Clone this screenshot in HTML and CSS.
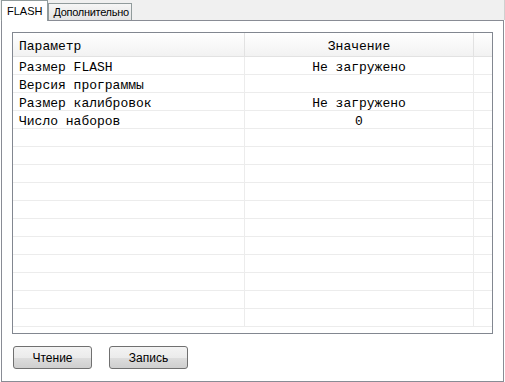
FILE: index.html
```html
<!DOCTYPE html>
<html>
<head>
  <title>FLASH</title>
  <link rel="stylesheet" href="styles.css">
</head>
<body>
  <div class="window">
    <div class="tabs">
      <div class="tab tab-active">FLASH</div>
      <div class="tab">Дополнительно</div>
    </div>

    <div class="pane">
      <div class="grid">
        <div class="grid-row grid-head">
          <div class="cell cell-name">Параметр</div>
          <div class="cell cell-value">Значение</div>
          <div class="cell cell-end"></div>
        </div>
        <div class="grid-row">
          <div class="cell cell-name">Размер FLASH</div>
          <div class="cell cell-value">Не загружено</div>
          <div class="cell cell-end"></div>
        </div>
        <div class="grid-row">
          <div class="cell cell-name">Версия программы</div>
          <div class="cell cell-value"></div>
          <div class="cell cell-end"></div>
        </div>
        <div class="grid-row">
          <div class="cell cell-name">Размер калибровок</div>
          <div class="cell cell-value">Не загружено</div>
          <div class="cell cell-end"></div>
        </div>
        <div class="grid-row">
          <div class="cell cell-name">Число наборов</div>
          <div class="cell cell-value">0</div>
          <div class="cell cell-end"></div>
        </div>
        <div class="grid-row"><div class="cell cell-name"></div><div class="cell cell-value"></div><div class="cell cell-end"></div></div>
        <div class="grid-row"><div class="cell cell-name"></div><div class="cell cell-value"></div><div class="cell cell-end"></div></div>
        <div class="grid-row"><div class="cell cell-name"></div><div class="cell cell-value"></div><div class="cell cell-end"></div></div>
        <div class="grid-row"><div class="cell cell-name"></div><div class="cell cell-value"></div><div class="cell cell-end"></div></div>
        <div class="grid-row"><div class="cell cell-name"></div><div class="cell cell-value"></div><div class="cell cell-end"></div></div>
        <div class="grid-row"><div class="cell cell-name"></div><div class="cell cell-value"></div><div class="cell cell-end"></div></div>
        <div class="grid-row"><div class="cell cell-name"></div><div class="cell cell-value"></div><div class="cell cell-end"></div></div>
        <div class="grid-row"><div class="cell cell-name"></div><div class="cell cell-value"></div><div class="cell cell-end"></div></div>
        <div class="grid-row"><div class="cell cell-name"></div><div class="cell cell-value"></div><div class="cell cell-end"></div></div>
        <div class="grid-row"><div class="cell cell-name"></div><div class="cell cell-value"></div><div class="cell cell-end"></div></div>
        <div class="grid-row"><div class="cell cell-name"></div><div class="cell cell-value"></div><div class="cell cell-end"></div></div>
      </div>

      <div class="buttons">
        <button id="readBtn">Чтение</button>
        <button id="writeBtn">Запись</button>
      </div>
    </div>
  </div>
</body>
</html>
```

FILE: styles.css
```css
    :root {
      --bg-color: #ffffff;
      --strip-bg: #f0f0f0;
      --pane-border: #898c95;
      --grid-border: #828790;
      --grid-line: #ececec;
      --text-color: #000000;
    }

    body {
      margin: 0;
      background-color: var(--bg-color);
      color: var(--text-color);
      font-family: 'Liberation Sans', Arial, sans-serif;
      font-size: 11px;
    }

    .window {
      width: 505px;
      height: 382px;
      display: flex;
      flex-direction: column;
    }

    /* Tab strip */
    .tabs {
      display: flex;
      align-items: flex-end;
      height: 20px;
      padding-left: 1px;
      background-color: var(--strip-bg);
      border-right: 1px solid #d0d0d0;
    }

    .tab {
      height: 16px;
      padding: 0 2px 0 4px;
      line-height: 17px;
      letter-spacing: -0.3px;
      border: 1px solid #919b9c;
      border-bottom: none;
      background: linear-gradient(#f6f6f6, #e4e4e4);
      white-space: nowrap;
    }

    .tab-active {
      height: 20px;
      line-height: 20px;
      padding: 0 5px 0 5px;
      letter-spacing: 0;
      background: var(--bg-color);
      margin-bottom: -1px; /* sits over the pane border */
      position: relative;
      z-index: 1;
    }

    /* Content pane */
    .pane {
      margin-left: 1px;
      border: 1px solid var(--pane-border);
      padding: 11px 10px 0 10px;
      display: flex;
      flex-direction: column;
      width: 481px;
      height: 349px;
    }

    .grid {
      width: 479px;
      height: 300px;
      border: 1px solid var(--grid-border);
      overflow: hidden;
      font-family: 'Liberation Mono', 'Courier New', monospace;
      font-size: 13px;
    }

    .grid-row {
      display: flex;
      height: 17px;
      border-bottom: 1px solid var(--grid-line);
      line-height: 17px;
    }

    .grid-head {
      height: 23px;
      line-height: 23px;
      background: linear-gradient(#ffffff, #f2f2f2);
      border-bottom: 1px solid #e2e2e2;
    }

    .cell {
      white-space: nowrap;
      overflow: hidden;
      box-sizing: border-box;
      padding-top: 2px;
    }

    .cell-name {
      width: 232px;
      padding-left: 6px;
      border-right: 1px solid var(--grid-line);
    }

    .cell-value {
      width: 229px;
      text-align: center;
      border-right: 1px solid var(--grid-line);
    }

    .cell-end { flex: 1; }

    .grid-head .cell-name,
    .grid-head .cell-value { border-right-color: #e2e2e2; }

    /* Buttons */
    .buttons {
      display: flex;
      gap: 17px;
      margin-top: 12px;
      padding-left: 1px;
    }

    button {
      width: 79px;
      height: 23px;
      margin: 0;
      padding: 0;
      font-family: 'Liberation Sans', Arial, sans-serif;
      font-size: 12px;
      color: var(--text-color);
      background: linear-gradient(#f3f3f3 0%, #ebebeb 50%, #dddddd 51%, #cfcfcf 100%);
      border: 1px solid #707070;
      border-radius: 3px;
      cursor: pointer;
    }
```
